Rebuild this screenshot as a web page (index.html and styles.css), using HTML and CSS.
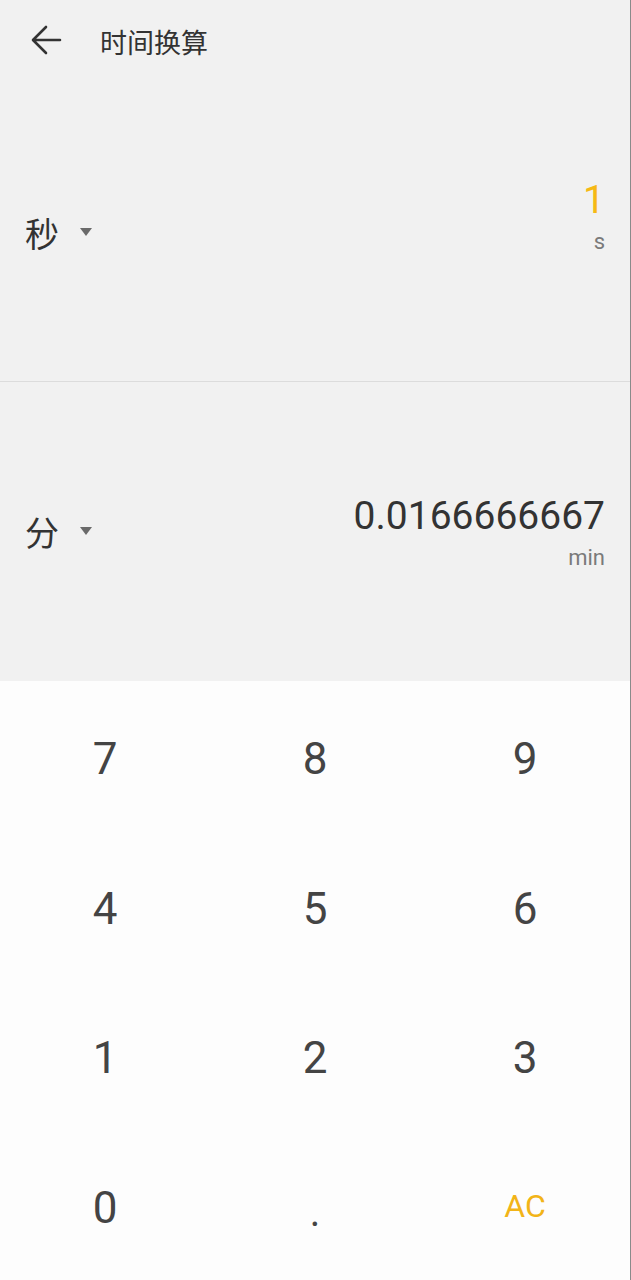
FILE: index.html
```html
<!DOCTYPE html>
<html lang="zh-CN">
<head>
<meta charset="utf-8">
<title>时间换算</title>
<link rel="stylesheet" href="styles.css">
</head>
<body>
<div class="page">
  <header class="topbar">
    <svg class="back" width="32" height="32" viewBox="0 0 32 32" aria-hidden="true">
      <path d="M30 15 H4 M16 2 L3 15 L16 28" fill="none" stroke="#333" stroke-width="2.6" stroke-linecap="round" stroke-linejoin="round"/>
    </svg>
    <h1 class="title">时间换算</h1>
  </header>

  <section class="unit-row unit-row--first">
    <div class="unit-select">
      <span class="unit-name">秒</span>
      <span class="caret"></span>
    </div>
    <div class="unit-value">
      <span class="value value--active">1</span>
      <span class="symbol">s</span>
    </div>
  </section>

  <section class="unit-row unit-row--second">
    <div class="unit-select">
      <span class="unit-name">分</span>
      <span class="caret"></span>
    </div>
    <div class="unit-value unit-value--second">
      <span class="value">0.0166666667</span>
      <span class="symbol">min</span>
    </div>
  </section>

  <div class="keypad">
    <button class="key">7</button>
    <button class="key">8</button>
    <button class="key">9</button>
    <button class="key">4</button>
    <button class="key">5</button>
    <button class="key">6</button>
    <button class="key">1</button>
    <button class="key">2</button>
    <button class="key">3</button>
    <button class="key">0</button>
    <button class="key key--dot">.</button>
    <button class="key key--ac">AC</button>
  </div>
</div>
</body>
</html>
```

FILE: styles.css
```css
html, body {
  margin: 0;
  padding: 0;
  background: #fdfdfd;
}

body {
  font-family: Roboto, "Noto Sans CJK SC", sans-serif;
  color: #333;
}

.page {
  width: 630px;
  height: 1280px;
  border-right: 1px solid #8a8a8a;
  display: flex;
  flex-direction: column;
  background: #f1f1f1;
}

.topbar {
  height: 84px;
  display: flex;
  align-items: center;
  padding-left: 30px;
  gap: 38px;
  flex: none;
}

.back {
  display: block;
  margin-top: -2px;
}

.title {
  margin: 0;
  font-family: "Noto Sans CJK SC", sans-serif;
  font-weight: 400;
  font-size: 27px;
  line-height: 1;
  color: #333;
  margin-top: -2px;
}

.unit-row {
  height: 298px;
  flex: none;
  display: flex;
  align-items: center;
  justify-content: space-between;
  padding: 0 25px 0 25px;
  box-sizing: border-box;
}

.unit-row--first {
  height: 298px;
  border-bottom: 1px solid #dcdcdc;
}

.unit-row--second {
  height: 299px;
}

.unit-select {
  display: flex;
  align-items: center;
  gap: 21px;
}

.unit-name {
  font-family: "Noto Sans CJK SC", sans-serif;
  font-size: 34px;
  line-height: 1;
  color: #333;
}

.caret {
  width: 0;
  height: 0;
  border-left: 6.5px solid transparent;
  border-right: 6.5px solid transparent;
  border-top: 8px solid #6a6a6a;
  margin-top: -2px;
}

.unit-value {
  display: flex;
  flex-direction: column;
  align-items: flex-end;
  margin-bottom: 34px;
}

.unit-value--second {
  margin-bottom: 0;
}

.value {
  font-family: Roboto, sans-serif;
  font-size: 39px;
  line-height: 46px;
  color: #333;
}

.value--active {
  color: #f6b915;
}

.symbol {
  font-family: Roboto, sans-serif;
  font-size: 22px;
  line-height: 26px;
  color: #7a7a7a;
  margin-top: 6px;
}

.keypad {
  flex: 1;
  display: grid;
  grid-template-columns: repeat(3, 1fr);
  grid-template-rows: repeat(4, 1fr);
  background: #fdfdfd;
}

.key {
  border: 0;
  background: transparent;
  font-family: Roboto, sans-serif;
  font-size: 44px;
  color: #444;
  margin: 0;
  display: flex;
  align-items: center;
  justify-content: center;
  padding: 6px 0 0 0;
}

.key--dot {
  font-size: 40px;
  padding-top: 15px;
}

.key--ac {
  font-size: 32px;
  color: #f2b418;
  padding-top: 2px;
}
```
